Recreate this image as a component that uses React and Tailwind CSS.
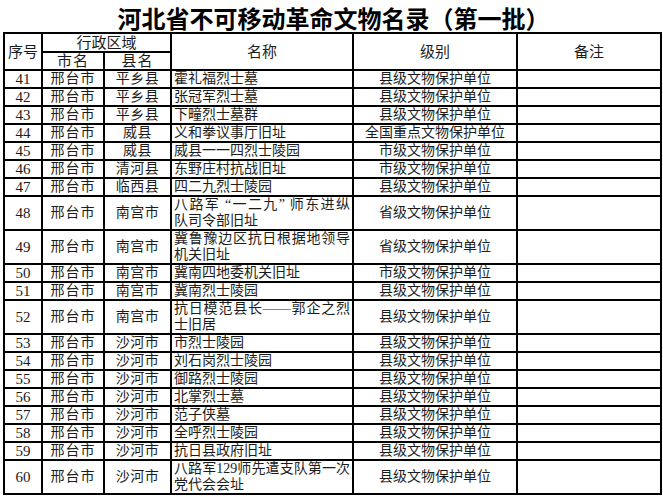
import React from "react";

const rows = [
  { no: 41, city: "邢台市", county: "平乡县", name: "霍礼福烈士墓", level: "县级文物保护单位" },
  { no: 42, city: "邢台市", county: "平乡县", name: "张冠军烈士墓", level: "县级文物保护单位" },
  { no: 43, city: "邢台市", county: "平乡县", name: "下疃烈士墓群", level: "县级文物保护单位" },
  { no: 44, city: "邢台市", county: "威县", name: "义和拳议事厅旧址", level: "全国重点文物保护单位" },
  { no: 45, city: "邢台市", county: "威县", name: "威县一一四烈士陵园", level: "市级文物保护单位" },
  { no: 46, city: "邢台市", county: "清河县", name: "东野庄村抗战旧址", level: "市级文物保护单位" },
  { no: 47, city: "邢台市", county: "临西县", name: "四二九烈士陵园", level: "县级文物保护单位" },
  { no: 48, city: "邢台市", county: "南宫市", name: ["八路军 “一二九” 师东进纵", "队司令部旧址"], level: "省级文物保护单位" },
  { no: 49, city: "邢台市", county: "南宫市", name: ["冀鲁豫边区抗日根据地领导", "机关旧址"], level: "省级文物保护单位" },
  { no: 50, city: "邢台市", county: "南宫市", name: "冀南四地委机关旧址", level: "市级文物保护单位" },
  { no: 51, city: "邢台市", county: "南宫市", name: "冀南烈士陵园", level: "县级文物保护单位" },
  { no: 52, city: "邢台市", county: "南宫市", name: ["抗日模范县长——郭企之烈", "士旧居"], level: "县级文物保护单位" },
  { no: 53, city: "邢台市", county: "沙河市", name: "市烈士陵园", level: "县级文物保护单位" },
  { no: 54, city: "邢台市", county: "沙河市", name: "刘石岗烈士陵园", level: "县级文物保护单位" },
  { no: 55, city: "邢台市", county: "沙河市", name: "御路烈士陵园", level: "县级文物保护单位" },
  { no: 56, city: "邢台市", county: "沙河市", name: "北掌烈士墓", level: "县级文物保护单位" },
  { no: 57, city: "邢台市", county: "沙河市", name: "范子侠墓", level: "县级文物保护单位" },
  { no: 58, city: "邢台市", county: "沙河市", name: "全呼烈士陵园", level: "县级文物保护单位" },
  { no: 59, city: "邢台市", county: "沙河市", name: "抗日县政府旧址", level: "县级文物保护单位" },
  { no: 60, city: "邢台市", county: "沙河市", name: ["八路军129师先遣支队第一次", "党代会会址"], level: "县级文物保护单位" },
];

export default function App() {
  return (
    <div lang="zh-CN" className="w-[663px] h-[497px] bg-white overflow-hidden text-black">
      {/* title */}
      <h1 className="mb-[-4px] text-center pl-[4px] text-[24px] font-bold leading-[36px] font-['Noto_Sans_CJK_SC',sans-serif]">
        河北省不可移动革命文物名录（第一批）
      </h1>

      <div className="relative ml-[3px] w-[659px] bg-black p-[2px] grid grid-cols-[36px_60px_65px_180px_162px_142px] gap-[2px] text-[14px] leading-4 text-[#1c1c1c] font-['Liberation_Serif','Noto_Sans_CJK_SC',serif]">
        {/* header */}
        <div className="row-span-2 bg-white flex items-center justify-center text-[15px]">序号</div>
        <div className="col-span-2 h-[17px] bg-white flex items-center justify-center text-[15px]">行政区域</div>
        <div className="row-span-2 bg-white flex items-center justify-center text-[15px]">名称</div>
        <div className="row-span-2 bg-white flex items-center justify-center text-[15px]">级别</div>
        <div className="row-span-2 bg-white flex items-center justify-center text-[15px]">备注</div>
        <div className="h-[16px] bg-white flex items-center justify-center text-[15px] tracking-[1px]">市名</div>
        <div className="h-[16px] bg-white flex items-center justify-center text-[15px] tracking-[1px]">县名</div>

        {/* body rows */}
        {rows.map((r) => {
          const double = Array.isArray(r.name);
          const h = double ? "h-[32px]" : "h-[16px]";
          return (
            <React.Fragment key={r.no}>
              <div className={`${h} bg-white flex items-center justify-center text-[15px]`}>{r.no}</div>
              <div className={`${h} bg-white flex items-center justify-center tracking-[1px]`}>{r.city}</div>
              <div className={`${h} bg-white flex items-center justify-center tracking-[0.5px]`}>{r.county}</div>
              <div className={`${h} bg-white px-[2px] flex flex-col justify-center`}>
                {double ? (
                  <>
                    <div className="text-justify [text-align-last:justify] whitespace-nowrap">{r.name[0]}</div>
                    <div>{r.name[1]}</div>
                  </>
                ) : (
                  <div className="whitespace-nowrap">{r.name}</div>
                )}
              </div>
              <div className={`${h} bg-white flex items-center justify-center`}>{r.level}</div>
              <div className={`${h} bg-white`} />
            </React.Fragment>
          );
        })}
      </div>
    </div>
  );
}
